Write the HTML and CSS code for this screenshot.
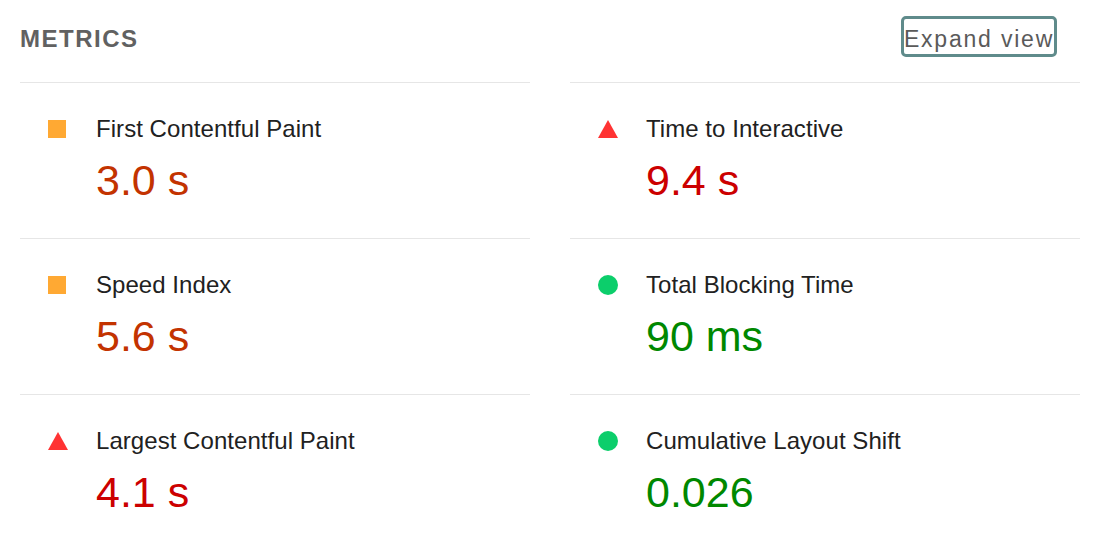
FILE: index.html
```html
<!DOCTYPE html>
<html>
<head>
<meta charset="utf-8">
<link rel="stylesheet" href="styles.css">
</head>
<body>
<div class="metrics">
  <div class="header">
    <div class="title">METRICS</div>
    <button class="toggle">Expand view</button>
  </div>
  <div class="grid">
    <div class="metric average">
      <div class="label"><span class="icon"></span><span class="name">First Contentful Paint</span></div>
      <div class="value">3.0 s</div>
    </div>
    <div class="metric fail">
      <div class="label"><span class="icon"></span><span class="name">Time to Interactive</span></div>
      <div class="value">9.4 s</div>
    </div>
    <div class="metric average">
      <div class="label"><span class="icon"></span><span class="name">Speed Index</span></div>
      <div class="value">5.6 s</div>
    </div>
    <div class="metric pass">
      <div class="label"><span class="icon"></span><span class="name">Total Blocking Time</span></div>
      <div class="value">90 ms</div>
    </div>
    <div class="metric fail">
      <div class="label"><span class="icon"></span><span class="name">Largest Contentful Paint</span></div>
      <div class="value">4.1 s</div>
    </div>
    <div class="metric pass">
      <div class="label"><span class="icon"></span><span class="name">Cumulative Layout Shift</span></div>
      <div class="value">0.026</div>
    </div>
  </div>
</div>
</body>
</html>
```
FILE: styles.css
```css
* { box-sizing: border-box; }
html, body { margin: 0; padding: 0; background: #fff; }
body { font-family: "Liberation Sans", Arial, Helvetica, sans-serif; }

.metrics { padding: 0 22px 0 20px; }

.header {
  display: flex;
  justify-content: space-between;
  align-items: flex-start;
  height: 82px;
  padding: 16px 23px 0 0;
}
.title {
  margin-top: 8px;
  font-size: 24px;
  line-height: 30px;
  font-weight: bold;
  letter-spacing: 1.5px;
  color: #616161;
}
.toggle {
  height: 41px;
  width: 156px;
  padding: 5px 0 0 0;
  border: 3px solid #5f8b8b;
  border-radius: 5px;
  background: #fff;
  font-family: "Liberation Sans", Arial, Helvetica, sans-serif;
  font-size: 23px;
  line-height: 30px;
  letter-spacing: 1.8px;
  color: #5a5a5a;
  display: flex;
  justify-content: center;
  align-items: flex-start;
  white-space: nowrap;
}

.grid {
  display: grid;
  grid-template-columns: 1fr 1fr;
  column-gap: 40px;
}
.metric {
  border-top: 1px solid #e6e6e6;
  height: 156px;
  padding: 31px 0 0 28px;
}
.label {
  display: flex;
  align-items: center;
  height: 30px;
}
.icon {
  width: 20px;
  height: 20px;
  margin-right: 28px;
  display: flex;
  align-items: center;
  justify-content: center;
  flex: none;
}
.icon::before { content: ""; display: block; }
.average .icon { justify-content: flex-start; }
.average .icon::before { width: 18px; height: 18px; background: #ffa933; }
.pass .icon::before { width: 20px; height: 20px; border-radius: 50%; background: #0cce6b; }
.fail .icon::before {
  width: 0; height: 0;
  border-left: 10px solid transparent;
  border-right: 10px solid transparent;
  border-bottom: 18px solid #ff3333;
}
.name {
  font-size: 24px;
  line-height: 30px;
  color: #212121;
  letter-spacing: 0.05px;
}
.value {
  margin-top: 11px;
  padding-left: 48px;
  font-size: 43px;
  line-height: 50px;
}
.average .value { color: #c33300; }
.pass .value { color: #008800; }
.fail .value { color: #cc0000; }
```
